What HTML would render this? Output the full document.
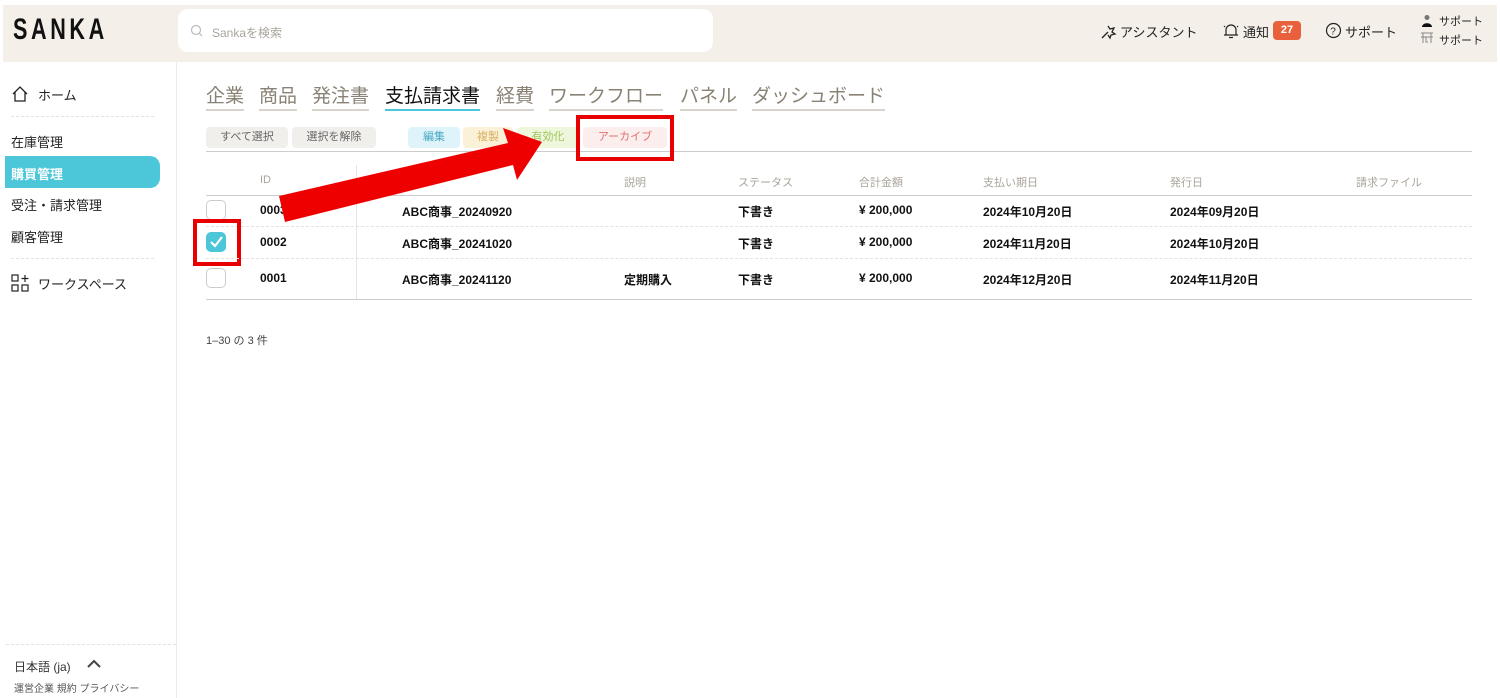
<!DOCTYPE html>
<html><head><meta charset="utf-8"><style>
*{margin:0;padding:0;box-sizing:border-box}
body{width:1500px;height:698px;background:#fff;font-family:"Liberation Sans","Noto Sans CJK JP",sans-serif;color:#222;position:relative;overflow:hidden}
.a{position:absolute;white-space:nowrap}
.hdr{position:absolute;left:3px;top:5px;width:1494px;height:57px;background:#f4f0e9}
.search{position:absolute;left:178px;top:9px;width:535px;height:43px;background:#fff;border-radius:10px}
.nav{font-size:13px;color:#222}
.tab{font-size:19px;color:#8a8275;border-bottom:2px solid #d8d4cc;padding-bottom:1px}
.btn{position:absolute;top:127px;height:21px;font-size:11px;line-height:21px;text-align:center;border-radius:4px}
.th{font-size:11px;color:#aaa49a;top:174px}
.td{font-size:12px;color:#111;font-weight:bold}
.cb{position:absolute;left:206px;width:20px;height:20px;border:1px solid #ccc;border-radius:5px;background:#fff}
.dot{position:absolute;border-top:1px dashed #e5e2dc}
</style></head><body>
<div class="hdr"></div>
<div class="a" style="left:13px;top:13px;font-size:30px;font-weight:bold;letter-spacing:5px;color:#111;transform:scaleX(0.72);transform-origin:left">SANKA</div>
<div class="search"></div>
<svg class="a" style="left:190px;top:24px" width="14" height="14" viewBox="0 0 14 14"><circle cx="6" cy="6" r="4.5" fill="none" stroke="#bbb" stroke-width="1.2"/><path d="M9.5 9.5L12 12" stroke="#bbb" stroke-width="1.2"/></svg>
<div class="a" style="left:212px;top:24px;font-size:12px;color:#a9a49b">Sankaを検索</div>
<svg class="a" style="left:1100px;top:22px" width="18" height="18" viewBox="0 0 18 18"><path d="M2 16L8 10M8 4l2 3 4-1-2 4 3 2-4 1-1 3-2-3" fill="none" stroke="#222" stroke-width="1.3"/></svg>
<div class="a nav" style="left:1120px;top:22px">アシスタント</div>
<svg class="a" style="left:1222px;top:22px" width="18" height="18" viewBox="0 0 18 18"><path d="M4 13V8a5 5 0 0110 0v5M2 13h14M7 15.5h4M3 5l-1-1M15 5l1-1" fill="none" stroke="#222" stroke-width="1.2"/></svg>
<div class="a nav" style="left:1243px;top:22px">通知</div>
<div class="a" style="left:1273px;top:21px;width:28px;height:19px;background:#e8603c;border-radius:4px;color:#fff;font-size:11px;font-weight:bold;text-align:center;line-height:19px">27</div>
<svg class="a" style="left:1325px;top:22px" width="17" height="17" viewBox="0 0 17 17"><circle cx="8.5" cy="8.5" r="7" fill="none" stroke="#222" stroke-width="1.2"/><text x="5.3" y="12.5" font-size="10" font-family="Liberation Sans" fill="#222">?</text></svg>
<div class="a nav" style="left:1345px;top:22px">サポート</div>
<svg class="a" style="left:1420px;top:14px" width="14" height="14" viewBox="0 0 14 14"><circle cx="7" cy="3.5" r="2.5" fill="#777"/><path d="M2 13c0-5 10-5 10 0z" fill="#111"/></svg>
<div class="a" style="left:1439px;top:13px;font-size:11px;color:#222">サポート</div>
<svg class="a" style="left:1420px;top:31px" width="14" height="14" viewBox="0 0 14 14"><path d="M1 2h12M1 6h12M3 2v10M11 2v10M6 6v5h2" fill="none" stroke="#888" stroke-width="1"/></svg>
<div class="a" style="left:1439px;top:32px;font-size:11px;color:#222">サポート</div>

<div class="a" style="left:176px;top:62px;width:1px;height:636px;background:#eeeae4"></div>
<svg class="a" style="left:11px;top:85px" width="18" height="18" viewBox="0 0 18 18"><path d="M2 9L9 2l7 7M4 7v9h10V7" fill="none" stroke="#222" stroke-width="1.3"/></svg>
<div class="a nav" style="left:38px;top:85px">ホーム</div>
<div class="dot" style="left:11px;top:116px;width:143px"></div>
<div class="a nav" style="left:11px;top:132px">在庫管理</div>
<div class="a" style="left:5px;top:156px;width:155px;height:32px;background:#4cc6d9;border-radius:0 10px 10px 0"></div>
<div class="a" style="left:11px;top:164px;font-size:13px;color:#fff;font-weight:bold">購買管理</div>
<div class="a nav" style="left:11px;top:195px">受注・請求管理</div>
<div class="a nav" style="left:11px;top:227px">顧客管理</div>
<div class="dot" style="left:11px;top:258px;width:143px"></div>
<svg class="a" style="left:11px;top:274px" width="18" height="18" viewBox="0 0 18 18"><rect x="1" y="1" width="6" height="6" fill="none" stroke="#222" stroke-width="1.2"/><rect x="1" y="11" width="6" height="6" fill="none" stroke="#222" stroke-width="1.2"/><rect x="11" y="11" width="6" height="6" fill="none" stroke="#222" stroke-width="1.2"/><path d="M14 1v7M10.5 4.5h7" stroke="#222" stroke-width="1.2"/></svg>
<div class="a nav" style="left:38px;top:274px">ワークスペース</div>
<div class="dot" style="left:6px;top:644px;width:170px"></div>
<div class="a" style="left:14px;top:658px;font-size:12px;color:#333">日本語 (ja)</div>
<svg class="a" style="left:86px;top:659px" width="16" height="10" viewBox="0 0 16 10"><path d="M2 8l6-6 6 6" fill="none" stroke="#444" stroke-width="2"/></svg>
<div class="a" style="left:14px;top:680px;font-size:10px;color:#555">運営企業 規約 プライバシー</div>

<div class="a tab" style="left:206px;top:81px">企業</div>
<div class="a tab" style="left:259px;top:81px">商品</div>
<div class="a tab" style="left:312px;top:81px">発注書</div>
<div class="a tab" style="left:385px;top:81px;color:#111;border-bottom-color:#4cc6d9">支払請求書</div>
<div class="a tab" style="left:496px;top:81px">経費</div>
<div class="a tab" style="left:549px;top:81px">ワークフロー</div>
<div class="a tab" style="left:680px;top:81px">パネル</div>
<div class="a tab" style="left:752px;top:81px">ダッシュボード</div>

<div class="btn" style="left:206px;width:82px;background:#f1efeb;color:#666">すべて選択</div>
<div class="btn" style="left:292px;width:84px;background:#f1efeb;color:#666">選択を解除</div>
<div class="btn" style="left:408px;width:52px;background:#dff4fa;color:#4aa9c4">編集</div>
<div class="btn" style="left:463px;width:50px;background:#fbf1d8;color:#d9b05f">複製</div>
<div class="btn" style="left:517px;width:62px;background:#eef7dc;color:#9fc55a">有効化</div>
<div class="btn" style="left:583px;width:84px;background:#fdeeee;color:#e07070">アーカイブ</div>
<div class="a" style="left:206px;top:151px;width:1266px;height:1px;background:#ccc"></div>
<div class="a" style="left:576px;top:115px;width:98px;height:46px;border:4px solid #e80000"></div>

<div class="a" style="left:356px;top:165px;width:1px;height:135px;background:#e8e5e0"></div>
<div class="a th" style="left:260px">ID</div>
<div class="a th" style="left:624px">説明</div>
<div class="a th" style="left:738px">ステータス</div>
<div class="a th" style="left:859px">合計金額</div>
<div class="a th" style="left:983px">支払い期日</div>
<div class="a th" style="left:1170px">発行日</div>
<div class="a th" style="left:1356px">請求ファイル</div>
<div class="a" style="left:206px;top:195px;width:1266px;height:1px;background:#ccc"></div>

<div class="cb" style="top:200px"></div>
<div class="a td" style="left:260px;top:203px">0003</div>
<div class="a td" style="left:402px;top:203px">ABC商事_20240920</div>
<div class="a td" style="left:738px;top:203px">下書き</div>
<div class="a td" style="left:859px;top:203px">¥ 200,000</div>
<div class="a td" style="left:983px;top:203px">2024年10月20日</div>
<div class="a td" style="left:1170px;top:203px">2024年09月20日</div>
<div class="dot" style="left:206px;top:226px;width:1266px"></div>
<div class="a" style="left:206px;top:232px;width:20px;height:20px;border-radius:5px;background:#4cc6d9"></div>
<svg class="a" style="left:206px;top:232px" width="20" height="20" viewBox="0 0 20 20"><path d="M5 10l4 4 7-9" fill="none" stroke="#fff" stroke-width="2.2"/></svg>
<div class="a" style="left:193px;top:219px;width:48px;height:47px;border:4px solid #e80000"></div>
<div class="a td" style="left:260px;top:235px">0002</div>
<div class="a td" style="left:402px;top:235px">ABC商事_20241020</div>
<div class="a td" style="left:738px;top:235px">下書き</div>
<div class="a td" style="left:859px;top:235px">¥ 200,000</div>
<div class="a td" style="left:983px;top:235px">2024年11月20日</div>
<div class="a td" style="left:1170px;top:235px">2024年10月20日</div>
<div class="dot" style="left:206px;top:258px;width:1266px"></div>
<div class="cb" style="top:268px"></div>
<div class="a td" style="left:260px;top:271px">0001</div>
<div class="a td" style="left:402px;top:271px">ABC商事_20241120</div>
<div class="a td" style="left:624px;top:271px">定期購入</div>
<div class="a td" style="left:738px;top:271px">下書き</div>
<div class="a td" style="left:859px;top:271px">¥ 200,000</div>
<div class="a td" style="left:983px;top:271px">2024年12月20日</div>
<div class="a td" style="left:1170px;top:271px">2024年11月20日</div>
<div class="a" style="left:206px;top:299px;width:1266px;height:1px;background:#ccc"></div>
<div class="a" style="left:206px;top:332px;font-size:11px;color:#444">1–30 の 3 件</div>

<svg class="a" style="left:0;top:0" width="700" height="300"><polygon points="279,196 508,143 503,128 542,142 517,180 513,165 285,222" fill="#ee0000"/></svg>
</body></html>
